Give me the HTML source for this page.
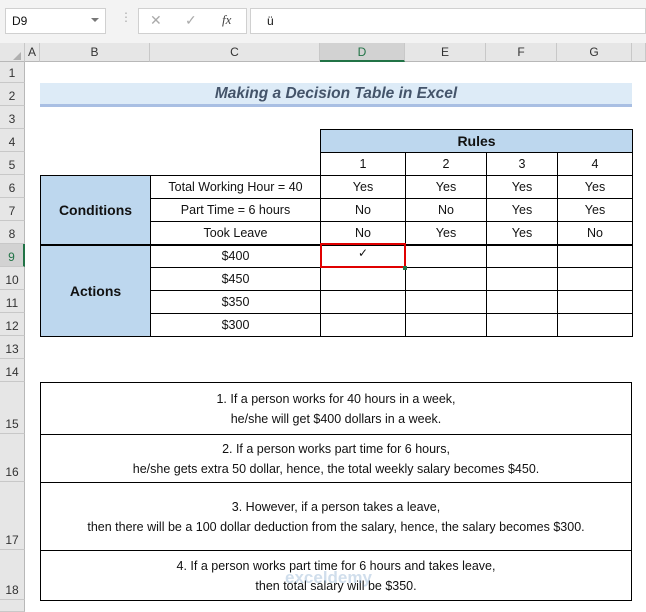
<!DOCTYPE html>
<html><head><meta charset="utf-8"><style>
*{margin:0;padding:0;box-sizing:border-box}
body{width:646px;height:612px;overflow:hidden;background:#fff;font-family:"Liberation Sans",sans-serif;font-size:12.5px;color:#111;position:relative}
.a{position:absolute}
.rh{position:absolute;left:0;width:25px;background:#e6e6e6;border-bottom:1px solid #c8c8c8;border-right:1px solid #b8b8b8;text-align:center;font-size:12px;color:#333;display:flex;align-items:flex-end;justify-content:center;padding-bottom:2px}
.ch{position:absolute;top:43px;height:19px;background:#e6e6e6;border-right:1px solid #c8c8c8;border-bottom:1px solid #b8b8b8;text-align:center;font-size:12px;line-height:18px;color:#333}
table{position:absolute;border-collapse:collapse;table-layout:fixed}
td{border:1px solid #000;text-align:center;height:23px;padding:0;font-size:12.5px;white-space:nowrap}
.blue{background:#bdd7ee;font-weight:bold;font-size:14px}
.note td{white-space:nowrap;line-height:20px;font-size:12.5px}
</style></head><body>
<div class="a" style="left:0;top:0;width:646px;height:43px;background:#f3f3f3"></div>
<div class="a" style="left:5px;top:8px;width:101px;height:26px;background:#fff;border:1px solid #d0d0d0;font-size:12px;line-height:24px;padding-left:6px">D9</div>
<div class="a" style="left:91px;top:18px;width:0;height:0;border-left:4px solid transparent;border-right:4px solid transparent;border-top:4px solid #777"></div>
<div class="a" style="left:120px;top:10px;color:#aaa;font-size:12px">⋮</div>
<div class="a" style="left:138px;top:8px;width:109px;height:26px;background:#fff;border:1px solid #d0d0d0"></div>
<div class="a" style="left:150px;top:12px;color:#aaa;font-size:14px">✕</div>
<div class="a" style="left:185px;top:12px;color:#aaa;font-size:14px">✓</div>
<div class="a" style="left:222px;top:12px;color:#444;font-size:13px;font-style:italic;font-family:'Liberation Serif',serif">fx</div>
<div class="a" style="left:250px;top:8px;width:396px;height:26px;background:#fff;border:1px solid #d0d0d0;font-size:12px;line-height:24px;padding-left:16px">ü</div>

<div class="ch" style="left:0;width:25px"></div>
<div class="a" style="left:13px;top:52px;width:0;height:0;border-left:8px solid transparent;border-bottom:8px solid #b0b0b0"></div>
<div class="ch" style="left:25px;width:15px">A</div>
<div class="ch" style="left:40px;width:110px">B</div>
<div class="ch" style="left:150px;width:170px">C</div>
<div class="ch" style="left:320px;width:85px;background:#d2d2d2;border-bottom:2px solid #217346;color:#217346">D</div>
<div class="ch" style="left:405px;width:81px">E</div>
<div class="ch" style="left:486px;width:71px">F</div>
<div class="ch" style="left:557px;width:75px">G</div>
<div class="ch" style="left:632px;width:14px"></div>

<div class="rh" style="top:62px;height:21px">1</div>
<div class="rh" style="top:83px;height:23px">2</div>
<div class="rh" style="top:106px;height:23px">3</div>
<div class="rh" style="top:129px;height:23px">4</div>
<div class="rh" style="top:152px;height:23px">5</div>
<div class="rh" style="top:175px;height:23px">6</div>
<div class="rh" style="top:198px;height:23px">7</div>
<div class="rh" style="top:221px;height:23px">8</div>
<div class="rh" style="top:244px;height:23px;background:#d2d2d2;border-right:2px solid #217346;color:#217346">9</div>
<div class="rh" style="top:267px;height:23px">10</div>
<div class="rh" style="top:290px;height:23px">11</div>
<div class="rh" style="top:313px;height:23px">12</div>
<div class="rh" style="top:336px;height:23px">13</div>
<div class="rh" style="top:359px;height:23px">14</div>
<div class="rh" style="top:382px;height:52px">15</div>
<div class="rh" style="top:434px;height:48px">16</div>
<div class="rh" style="top:482px;height:68px">17</div>
<div class="rh" style="top:550px;height:50px">18</div>
<div class="rh" style="top:600px;height:12px"></div>

<div class="a" style="left:40px;top:83px;width:592px;height:21px;background:#ddebf7;text-align:center;font-weight:bold;font-style:italic;font-size:15.5px;line-height:22px;color:#44546a">Making a Decision Table in Excel</div>
<div class="a" style="left:40px;top:104px;width:592px;height:3px;background:#a9bfe3"></div>

<table style="left:320px;top:129px;width:312px">
<colgroup><col style="width:85px"><col style="width:81px"><col style="width:71px"><col style="width:75px"></colgroup>
<tr><td colspan="4" class="blue">Rules</td></tr>
<tr><td>1</td><td>2</td><td>3</td><td>4</td></tr>
</table>
<table style="left:40px;top:175px;width:592px">
<colgroup><col style="width:110px"><col style="width:170px"><col style="width:85px"><col style="width:81px"><col style="width:71px"><col style="width:75px"></colgroup>
<tr><td rowspan="3" class="blue">Conditions</td><td>Total Working Hour = 40</td><td>Yes</td><td>Yes</td><td>Yes</td><td>Yes</td></tr>
<tr><td>Part Time = 6 hours</td><td>No</td><td>No</td><td>Yes</td><td>Yes</td></tr>
<tr><td>Took Leave</td><td>No</td><td>Yes</td><td>Yes</td><td>No</td></tr>
<tr style="border-top:2px solid #000"><td rowspan="4" class="blue" style="border-top:2px solid #000">Actions</td><td style="border-top:2px solid #000">$400</td><td style="border-top:2px solid #000;vertical-align:top;font-size:12px">✓</td><td style="border-top:2px solid #000"></td><td style="border-top:2px solid #000"></td><td style="border-top:2px solid #000"></td></tr>
<tr><td>$450</td><td></td><td></td><td></td><td></td></tr>
<tr><td>$350</td><td></td><td></td><td></td><td></td></tr>
<tr><td>$300</td><td></td><td></td><td></td><td></td></tr>
</table>
<div class="a" style="left:320px;top:243px;width:86px;height:25px;border:2px solid #e00000"></div>
<div class="a" style="left:403px;top:266px;width:4px;height:4px;background:#217346"></div>

<table class="note" style="left:40px;top:382px;width:592px">
<tr><td style="height:52px">1. If a person works for 40 hours in a week,<br>he/she will get $400 dollars in a week.</td></tr>
<tr><td style="height:48px">2. If a person works part time for 6 hours,<br>he/she gets extra 50 dollar, hence, the total weekly salary becomes $450.</td></tr>
<tr><td style="height:68px">3. However, if a person takes a leave,<br>then there will be a 100 dollar deduction from the salary, hence, the salary becomes $300.</td></tr>
<tr><td style="height:50px">4. If a person works part time for 6 hours and takes leave,<br>then total salary will be $350.</td></tr>
</table>
<div class="a" style="left:285px;top:568px;color:rgba(120,160,200,0.35);font-size:17px;font-weight:bold">exceldemy</div>
</body></html>
